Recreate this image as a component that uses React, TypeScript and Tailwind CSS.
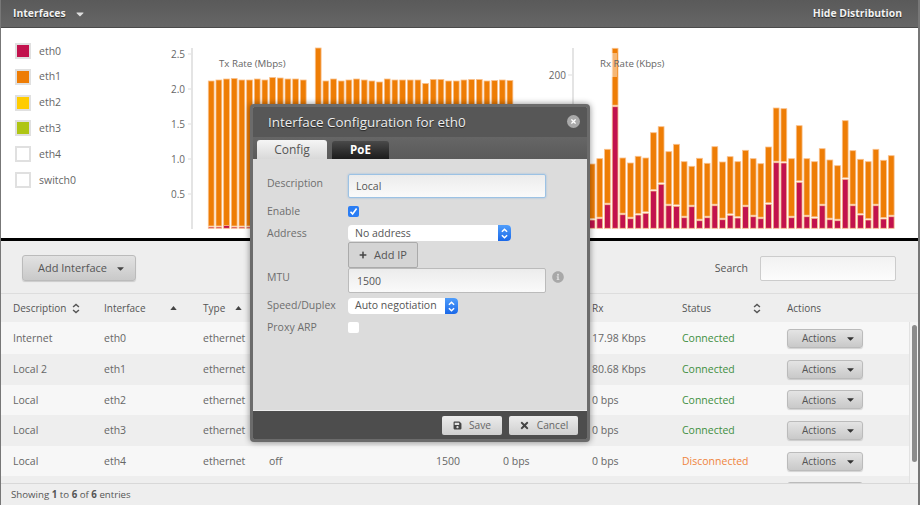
import { FaCaretDown, FaInfoCircle, FaPlus, FaSave, FaTimes } from "react-icons/fa";

const legend = [
  { name: "eth0", color: "bg-[#c2124d]" },
  { name: "eth1", color: "bg-[#ee7d05]" },
  { name: "eth2", color: "bg-[#ffcc00]" },
  { name: "eth3", color: "bg-[#afc514]" },
  { name: "eth4", color: "bg-white" },
  { name: "switch0", color: "bg-white" },
];

// top of each stacked bar, read off the reference
const txTops = [81, 80, 79, 78.5, 80, 80, 79, 80, 77.5, 78, 79, 79, 80];
const txTops2 = [48, 81, 79, 81, 80, 79, 80, 81, 82, 79, 80, 80, 80, 80, 83.5, 79.5, 79.5, 81, 81, 80, 79.5, 79.5, 81, 80.5, 80, 80.5];
const rxBars = [
  [164, 220], [158.7, 218.7], [149.3, 204.7], [48.3, 106.7], [158, 214.7], [163, 218.7], [156.3, 215], [158, 213.3],
  [132.7, 191], [126.7, 184.3], [151.7, 205.7], [144.3, 206.3], [161.7, 217.7], [166.3, 206.7], [158.3, 220.7], [163.3, 217.7],
  [146.7, 205.7], [162, 219.7], [156.7, 215.3], [161.7, 218], [150.3, 206.7], [158.7, 216.7], [163.7, 218.7], [147, 204.3],
  [108, 162.7], [108.7, 163], [158.7, 217.7], [125.7, 182.3], [158.7, 216.7], [161.7, 218.3], [148.7, 205.7], [160, 219.7],
  [165.7, 220.7], [120.7, 179.3], [150.7, 205.7], [159.3, 215], [161.7, 220], [149.3, 205.7], [160.3, 219], [155.7, 216.7],
];

const rows = [
  { desc: "Internet", iface: "eth0", poe: "", mtu: "", tx: "", rx: "17.98 Kbps", status: "Connected" },
  { desc: "Local 2", iface: "eth1", poe: "", mtu: "", tx: "", rx: "80.68 Kbps", status: "Connected" },
  { desc: "Local", iface: "eth2", poe: "", mtu: "", tx: "", rx: "0 bps", status: "Connected" },
  { desc: "Local", iface: "eth3", poe: "", mtu: "", tx: "", rx: "0 bps", status: "Connected" },
  { desc: "Local", iface: "eth4", poe: "off", mtu: "1500", tx: "0 bps", rx: "0 bps", status: "Disconnected" },
];

const gridCols = "grid grid-cols-[103px_99px_66px_167px_67px_89px_90px_105px_1fr] items-center";

function Bar({ x, top, bottom, fill }: { x: number; top: number; bottom: number; fill: string }) {
  return <rect x={x} y={top} width={5.8} height={bottom - top} fill={fill} stroke="#f9c08c" strokeWidth={0.8} />;
}

function Chart() {
  return (
    <svg width={758} height={210} viewBox="160 28 758 210" className="block">
      <g fill="#666" fontSize="10" fontFamily="'Open Sans', sans-serif">
        {[["2.5", 54], ["2.0", 89], ["1.5", 124], ["1.0", 159], ["0.5", 194]].map(([label, y]) => (
          <g key={label}>
            <text x={185} y={Number(y) + 4} textAnchor="end">{label}</text>
            <line x1={188} x2={192} y1={y} y2={y} stroke="#ddd" />
          </g>
        ))}
        <text x={566} y={79} textAnchor="end">200</text>
        <line x1={568} x2={573} y1={75} y2={75} stroke="#ddd" />
      </g>
      <line x1={192} x2={192} y1={48} y2={229} stroke="#e4e4e4" strokeWidth={2} />
      <line x1={573} x2={573} y1={48} y2={229} stroke="#e4e4e4" strokeWidth={2} />
      {txTops.map((t, i) => (
        <g key={i}>
          <Bar x={208.3 + i * 7.67} top={t} bottom={226} fill="#ee7d05" />
          <Bar x={208.3 + i * 7.67} top={i === 2 ? 225.5 : 227} bottom={228.3} fill="#c2124d" />
        </g>
      ))}
      {txTops2.map((t, i) => (
        <Bar key={i} x={315.3 + i * 7.67} top={t} bottom={228} fill="#ee7d05" />
      ))}
      {rxBars.map(([t, r], i) => (
        <g key={i}>
          <Bar x={589.2 + i * 7.67} top={t} bottom={r - 1.5} fill="#ee7d05" />
          <Bar x={589.2 + i * 7.67} top={r} bottom={228.3} fill="#c2124d" />
        </g>
      ))}
      <rect x={601} y={53} width={16} height={24} fill="#fff" opacity={0.45} />
      <g fill="#666" fontSize="9.7" fontFamily="'Open Sans', sans-serif">
        <text x={219} y={67}>Tx Rate (Mbps)</text>
        <text x={600} y={67}>Rx Rate (Kbps)</text>
      </g>
    </svg>
  );
}

function SortIcon() {
  return (
    <svg width="8" height="11" viewBox="0 0 9 12" fill="none" stroke="#555" strokeWidth="1.6">
      <path d="M1.2 4.4 4.5 1.4l3.3 3M1.2 7.6l3.3 3 3.3-3" />
    </svg>
  );
}

function CaretUp() {
  return (
    <svg width="7" height="4" viewBox="0 0 8 5" fill="#444">
      <path d="M4 0 8 5H0z" />
    </svg>
  );
}

function Stepper() {
  return (
    <div className="flex w-[13px] items-center justify-center self-stretch rounded-r-[4px] bg-gradient-to-b from-[#4f9dfb] to-[#1a68e8]">
      <svg width="7" height="11" viewBox="0 0 7 11" fill="none" stroke="#fff" strokeWidth="1.5">
        <path d="M.9 3.8 3.5 1.2l2.6 2.6M.9 7.2l2.6 2.6 2.6-2.6" />
      </svg>
    </div>
  );
}

function ActionsButton({ label = true }: { label?: boolean }) {
  return (
    <button className="flex h-[19px] w-[76px] items-center gap-[9px] rounded-[3px] border border-[#bbb] bg-gradient-to-b from-[#e4e4e4] to-[#c9c9c9] pl-[14px] text-[10px] text-[#555] shadow-[0_1px_1px_rgba(0,0,0,0.15)]">
      {label && <span className="pt-[1px]">Actions</span>}
      {label && <FaCaretDown className="size-[11px] text-[#333]" />}
    </button>
  );
}

function Modal() {
  return (
    <div className="absolute left-[249px] top-[104px] flex h-[338px] w-[340px] flex-col overflow-hidden rounded-[4px] border-[3px] border-[#6b6b6b] bg-[#dcdcdc] text-[#6e6e6e] shadow-[0_0_6px_rgba(0,0,0,0.45)]">
      <div className="flex h-[30px] shrink-0 items-center justify-between bg-[#575757] pl-[15px] pr-[7px]">
        <span className="text-[13.4px] text-[#eeeeee] [text-shadow:0_1px_1px_#222]">Interface Configuration for eth0</span>
        <span className="mb-[2px] flex size-[13px] items-center justify-center rounded-full bg-[#a9a9a9]">
          <FaTimes className="size-[7px] text-white" />
        </span>
      </div>
      <div className="flex h-[22px] shrink-0 items-end gap-[5px] bg-gradient-to-b from-[#666666] to-[#5a5a5a] pl-[4px] text-[12px]">
        <div className="flex h-[19px] w-[70px] items-center justify-center rounded-t-[3px] bg-gradient-to-b from-[#f5f5f5] to-[#d9d9d9] text-[#555]">Config</div>
        <div className="flex h-[18px] w-[57px] items-center justify-center rounded-t-[3px] bg-gradient-to-b from-[#4a4a4a] to-[#1c1c1c] text-[11.5px] font-bold text-white">PoE</div>
      </div>
      <div className="flex-1 pl-[14px] pt-[15px] text-[10.5px]">
        <div className="flex h-[24px]">
          <span className="w-[81px] pt-[2px]">Description</span>
          <input readOnly value="Local" className="h-[24px] w-[198px] rounded-[2px] border border-[#9cc2e4] bg-gradient-to-b from-[#ececec] to-[#fafafa] px-[7px] text-[#555] shadow-[0_0_2px_rgba(90,160,230,0.6)] outline-none" />
        </div>
        <div className="mt-[7px] flex h-[12px] items-center">
          <span className="w-[81px] pt-[1px]">Enable</span>
          <span className="flex size-[11px] items-center justify-center rounded-[2px] bg-[#2a7df4]">
            <svg width="9" height="9" viewBox="0 0 9 9" fill="none" stroke="#fff" strokeWidth="1.6">
              <path d="M1.5 4.8 3.6 7 7.6 1.6" />
            </svg>
          </span>
        </div>
        <div className="mt-[8px] flex h-[16px] items-center">
          <span className="w-[81px] pt-[2px]">Address</span>
          <div className="flex h-[16px] w-[163px] items-center justify-between rounded-[4px] bg-white pl-[7px] text-[#555]">
            <span className="pt-[2px]">No address</span>
            <Stepper />
          </div>
        </div>
        <div className="mt-[1px] pl-[81px]">
          <button className="flex h-[26px] w-[70px] items-center justify-center gap-[7px] rounded-[2px] border border-[#aaa] bg-[#d4d4d4] text-[11px] text-[#555]">
            <FaPlus className="size-[8px] text-[#444]" />
            Add IP
          </button>
        </div>
        <div className="flex h-[25px]">
          <span className="w-[81px] pt-[2px]">MTU</span>
          <input readOnly value="1500" className="h-[25px] w-[198px] rounded-[2px] border border-[#bbb] bg-gradient-to-b from-[#ececec] to-[#fafafa] px-[8px] text-[#555] outline-none" />
          <FaInfoCircle className="ml-[6px] mt-[3px] size-[12px] text-[#a8a8a8]" />
        </div>
        <div className="mt-[5px] flex h-[16px] items-center">
          <span className="w-[81px]">Speed/Duplex</span>
          <div className="flex h-[16px] w-[110px] items-center justify-between rounded-[4px] bg-white pl-[7px] text-[#555]">
            Auto negotiation
            <Stepper />
          </div>
        </div>
        <div className="mt-[8px] flex h-[11px] items-center">
          <span className="w-[81px]">Proxy ARP</span>
          <span className="size-[11px] rounded-[2px] bg-white" />
        </div>
      </div>
      <div className="flex h-[29px] shrink-0 items-center justify-end gap-[7px] border-t border-[#eee] bg-[#4d4d4d] pr-[9px] text-[10.2px] text-[#666]">
        <button className="flex h-[19px] w-[60px] items-center justify-center gap-[7px] rounded-[2px] bg-gradient-to-b from-[#ececec] to-[#cfcfcf]">
          <FaSave className="size-[9px] text-[#444]" />
          <span className="pt-[1px]">Save</span>
        </button>
        <button className="flex h-[19px] w-[69px] items-center justify-center gap-[7px] rounded-[2px] bg-gradient-to-b from-[#ececec] to-[#cfcfcf]">
          <FaTimes className="size-[11px] text-[#444]" />
          <span className="pt-[1px]">Cancel</span>
        </button>
      </div>
    </div>
  );
}

export default function App() {
  return (
    <div className="relative flex h-[505px] w-[920px] flex-col overflow-hidden border-l border-r-2 border-[#777] bg-[#eeeeee] font-['Open_Sans',sans-serif] text-[10.5px] text-[#666]">
      <div className="flex h-[28px] shrink-0 items-center justify-between border-b border-[#4a4a4a] bg-gradient-to-b from-[#5a5a5a] to-[#666666] pl-[12px] pr-[16px] pt-[1px] text-[10.4px] font-bold text-[#f2f2f2] [text-shadow:0_1px_1px_#222]">
        <div className="flex items-center gap-[8px]">
          Interfaces
          <FaCaretDown className="size-[12px] text-[#ddd]" />
        </div>
        <span>Hide Distribution</span>
      </div>

      {/* distribution charts */}
      <div className="flex h-[210px] shrink-0 bg-white">
        <div className="flex w-[159px] shrink-0 flex-col gap-[9.8px] pl-[14px] pt-[15px]">
          {legend.map((item) => (
            <div key={item.name} className="flex h-[16px] items-center gap-[8px]">
              <span className={`size-[16px] border-2 border-[#e0e0e0] ${item.color}`} />
              <span className="pt-[1px]">{item.name}</span>
            </div>
          ))}
        </div>
        <Chart />
      </div>
      <div className="h-[3px] shrink-0 bg-black" />

      <div className="flex h-[53px] shrink-0 items-center justify-between border-b border-[#dddddd] pl-[21px] pr-[22px] pt-[2px]">
        <button className="flex h-[26px] w-[114px] items-center gap-[8px] rounded-[3px] border border-[#bbb] bg-gradient-to-b from-[#e2e2e2] to-[#c9c9c9] pl-[15px] text-[11px] text-[#555] shadow-[0_1px_1px_rgba(0,0,0,0.15)]">
          Add Interface
          <FaCaretDown className="size-[11px] text-[#444]" />
        </button>
        <div className="flex items-center gap-[12px] text-[#555]">
          <span className="pt-[1px]">Search</span>
          <input readOnly className="h-[25px] w-[136px] rounded-[2px] border border-[#ccc] bg-gradient-to-b from-[#f2f2f2] to-[#fcfcfc] outline-none" />
        </div>
      </div>

      <div className={`${gridCols} h-[28px] shrink-0 text-[10px] text-[#555]`}>
        <span className="flex items-center gap-[6px] pl-[12px]">Description <SortIcon /></span>
        <span className="flex items-center gap-[24px]">Interface <CaretUp /></span>
        <span className="flex items-center gap-[10px]">Type <CaretUp /></span>
        <span />
        <span />
        <span />
        <span>Rx</span>
        <span className="flex items-center gap-[42px]">Status <SortIcon /></span>
        <span>Actions</span>
      </div>

      {/* table body, sixth row is cut off by the footer */}
      <div className="relative min-h-0 flex-1 overflow-hidden">
        {rows.map((row, i) => (
          <div key={i} className={`${gridCols} ${i === 0 ? "h-[32px]" : "h-[30.6px]"} ${i % 2 === 0 ? "bg-[#f7f7f7]" : "bg-[#eeeeee]"}`}>
            <span className="pl-[12px] pt-[1px]">{row.desc}</span>
            <span className="pt-[1px]">{row.iface}</span>
            <span className="pt-[1px]">ethernet</span>
            <span className="pt-[1px]">{row.poe}</span>
            <span className="pt-[1px]">{row.mtu}</span>
            <span className="pt-[1px]">{row.tx}</span>
            <span className="pt-[1px]">{row.rx}</span>
            <span className={`pt-[1px] ${row.status === "Connected" ? "text-[#3f8f3f]" : "text-[#f0843c]"}`}>{row.status}</span>
            <ActionsButton />
          </div>
        ))}
        <div className={`${gridCols} h-[30.6px] bg-[#eeeeee]`}>
          <span className="col-start-9">
            <ActionsButton label={false} />
          </span>
        </div>
        <div className="absolute bottom-0 right-0 top-0 w-[9px] border-l border-[#e2e2e2] bg-[#f4f4f4]">
          <div className="ml-[2px] mt-[3px] h-[137px] w-[5px] rounded-full bg-[#8c8c8c]" />
        </div>
      </div>

      <div className="flex h-[22px] shrink-0 items-center border-t border-[#d8d8d8] pl-[10px] pt-[1px] text-[9.7px] text-[#555]">
        <span>Showing <b>1</b> to <b>6</b> of <b>6</b> entries</span>
      </div>

      <Modal />
    </div>
  );
}
